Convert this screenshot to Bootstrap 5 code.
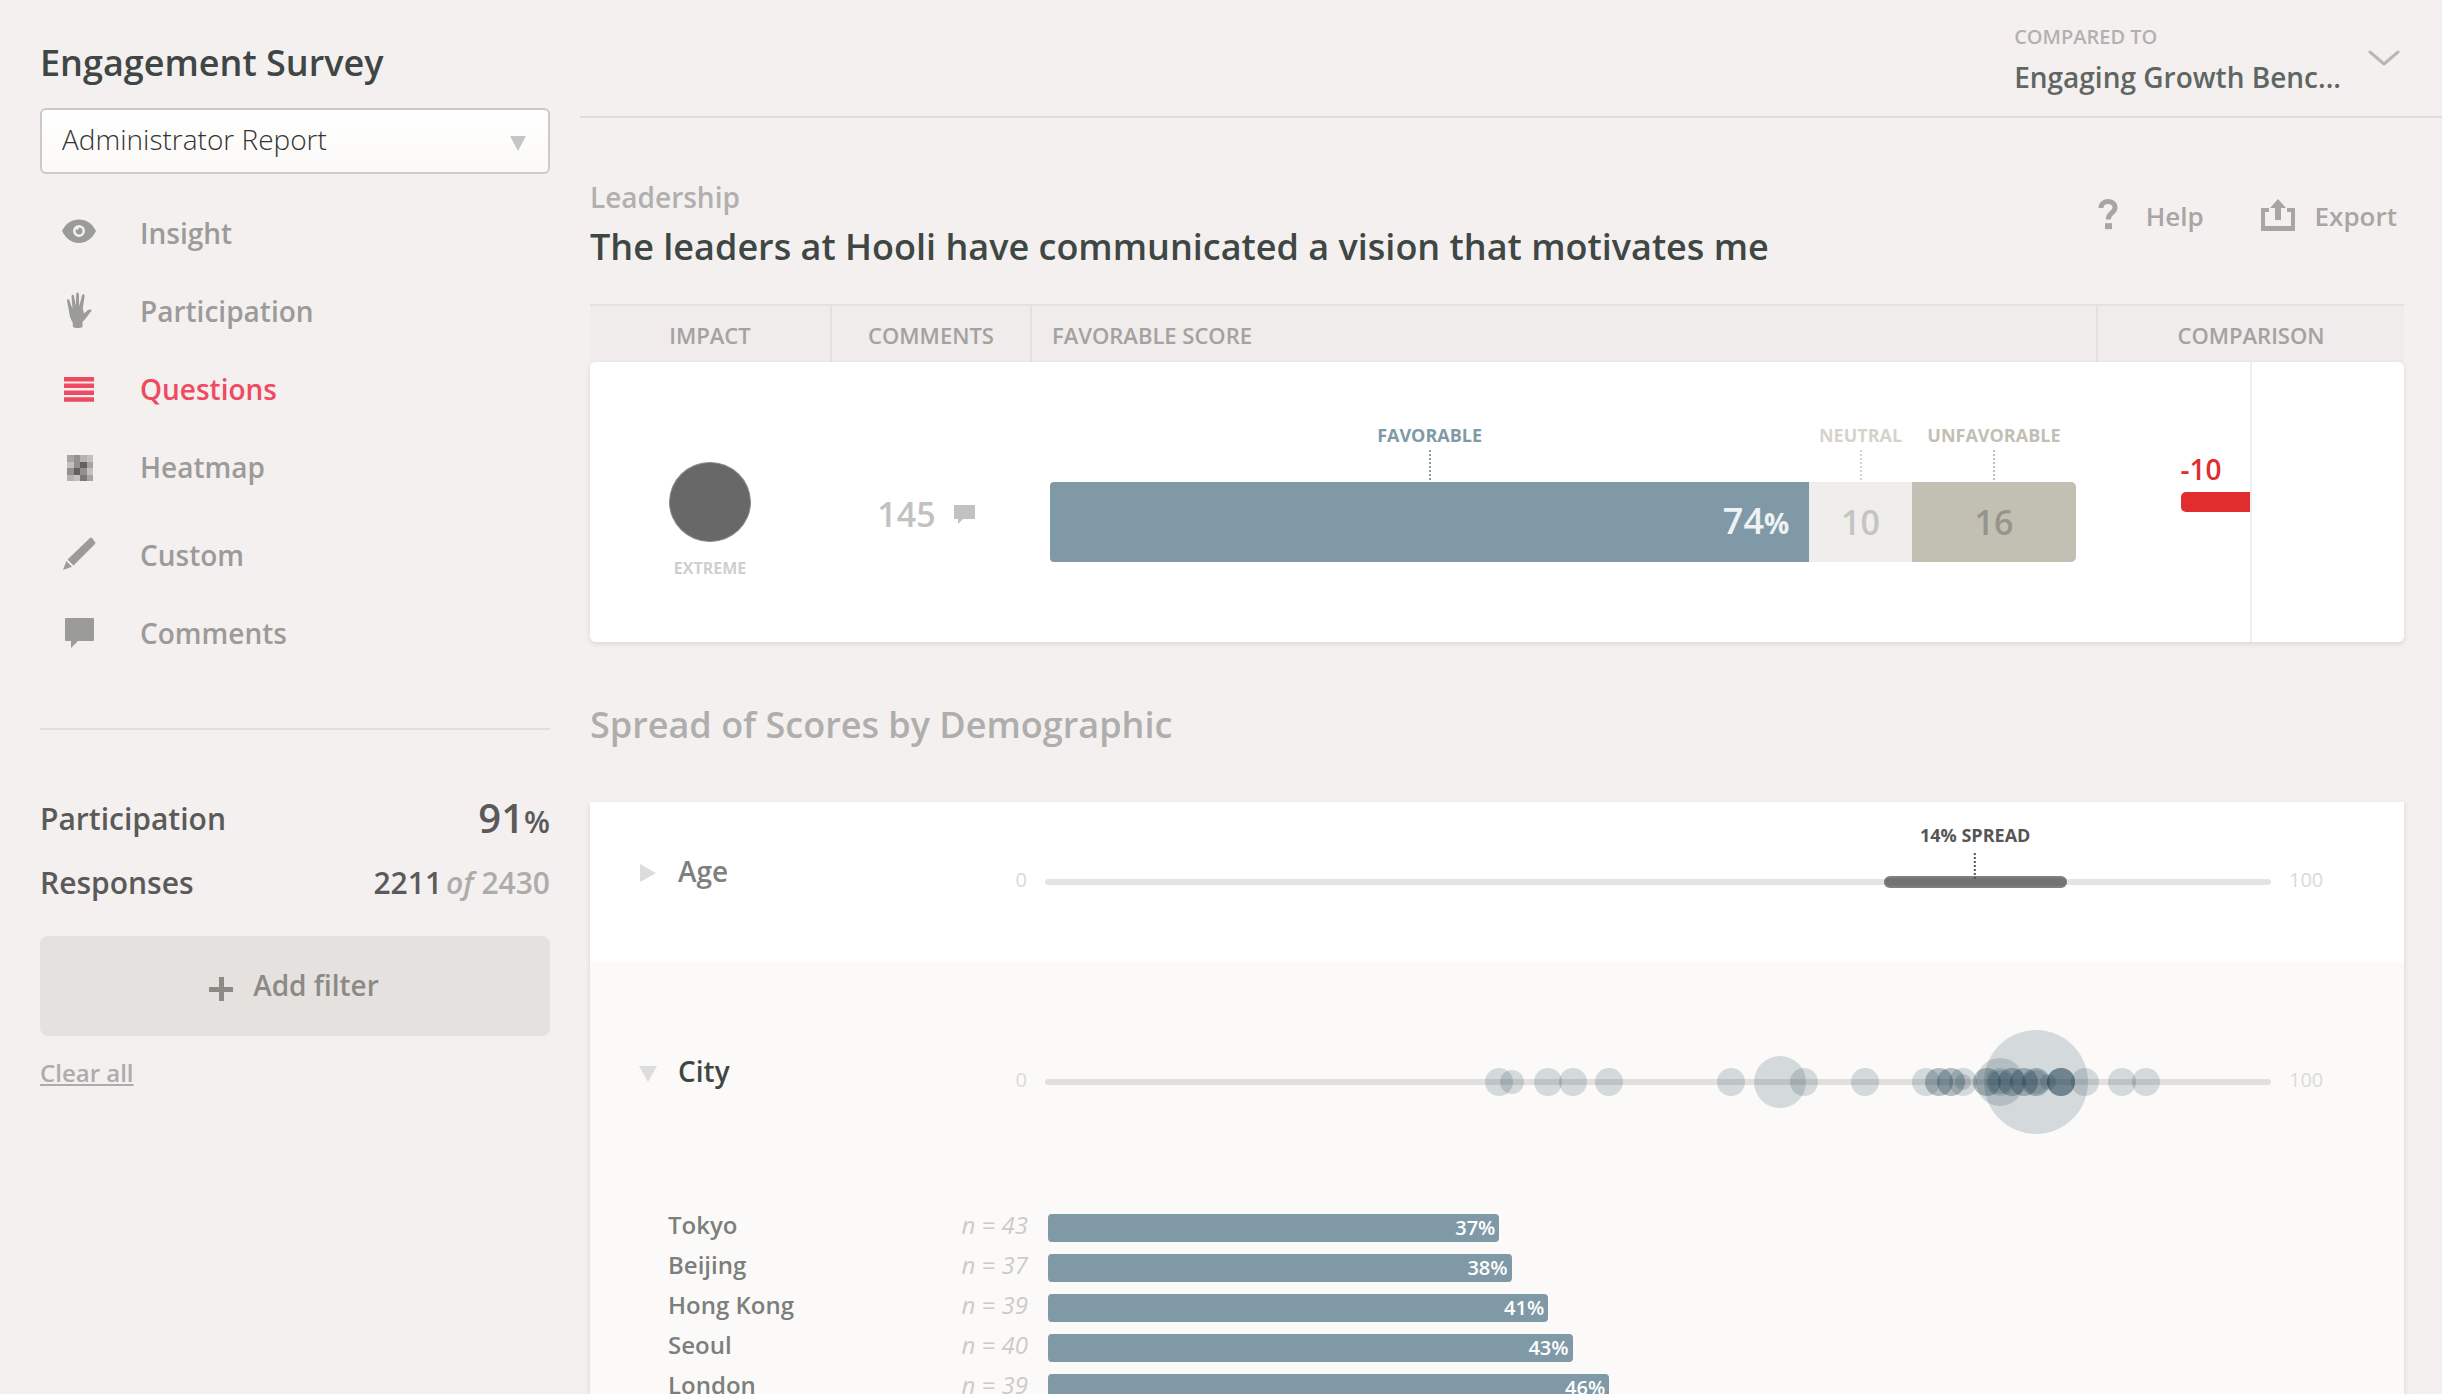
<!DOCTYPE html>
<html lang="en">
<head>
<meta charset="utf-8">
<meta name="viewport" content="width=device-width, initial-scale=1">
<title>Engagement Survey</title>
<link href="https://cdn.jsdelivr.net/npm/bootstrap@5.3.0/dist/css/bootstrap.min.css" rel="stylesheet">
<style>
body{font-family:"Open Sans","Noto Sans",sans-serif;background:#f4f0ef;color:#3f4744;font-weight:600;height:100vh;overflow:hidden}
svg{display:block;flex:none}
a{text-decoration:none;color:inherit}
.side{width:580px;padding:39px 30px 0 40px}
.page-title{font-size:36px;line-height:48px;font-weight:600;margin:0 0 21px}
.report{height:66px;border:2px solid #cdc9c8;border-radius:6px;background:linear-gradient(#fff,#faf9f7);font-size:28px;font-weight:300;line-height:40px;color:#333;padding:9px 60px 13px 20px;width:100%;appearance:none}
.report-arrow{position:absolute;right:24px;top:28px;pointer-events:none}
.menu{margin-top:20px}
.menu-gap{margin-top:10px}
.menu-link{display:flex;align-items:center;gap:40px;height:78px;padding-left:20px;font-size:28px;color:#9b9b99}
.menu-link.current{color:#f04a60}
.rule{height:2px;background:#e2dedd;margin:56px 0}
.stat{height:64px;font-size:30px;color:#5a5a5a}
.stat-big{font-size:40px}
.stat-unit{font-size:30px}
.soft{color:#acacab}
.filter-btn{height:100px;width:100%;border:0;border-radius:8px;background:#e5e1de;color:#8b8a85;font-size:28px;line-height:40px;font-weight:600;margin-top:22px;padding-right:8px}
.filter-text{padding-bottom:2px}
.clear{display:inline-block;font-size:24px;line-height:36px;margin-top:19px;color:#acacab;text-decoration:underline;font-weight:600}
.topbar{border-bottom:2px solid #e0dcdb;padding:23px 42px 19px 0}
.compare{border:0;background:none;padding:0;text-align:left;font-weight:600;gap:27px}
.compare-label{font-size:20px;line-height:28px;color:#b3b1b0}
.compare-value{font-size:28px;line-height:40px;color:#5f6664;margin-top:6px}
.content{padding:59px 38px 0 10px}
.topic{font-size:28px;line-height:40px;color:#b0b0ae}
.question{font-size:36px;line-height:48px;font-weight:600;margin:6px 0 33px}
.actions{font-size:26px;line-height:36px;color:#a7a6a4;padding:21px 7px 0 0;gap:57px}
.score{width:100%;table-layout:fixed;border-collapse:separate;border-spacing:0}
.score th{height:58px;border-top:2px solid #e5e1e0;border-right:2px solid #e5e1e0;background:#f0eceb;font-size:22px;line-height:32px;font-weight:600;color:#a3a2a0;text-align:center;padding:2px 0 0}
.score th:last-child{border-right:0}
.score td{height:280px;background:#fff;vertical-align:top;padding:0}
.score tbody tr{box-shadow:0 2px 5px rgba(80,60,60,.14);border-radius:6px}
.score td:first-child{border-radius:6px 0 0 6px}
.score td:last-child{border-radius:0 6px 6px 0}
.c-impact{width:242px}.c-comments{width:200px}.c-compare{width:306px}
.score .score-head{text-align:left;padding-left:20px}
.score .impact-cell{padding:100px 2px 0 0}
.impact-dot{width:82px;height:80px;border-radius:50%;background:#686868;border:1px solid #8a8a8a;margin:0 auto}
.impact-text{font-size:16px;line-height:24px;color:#cfcfcf;font-weight:700;text-align:center;margin-top:14px}
.score .comment-cell{padding:132px 12px 0 0}
.comment-count{font-size:34px;line-height:40px;color:#c2c2c2;gap:18px}
.score .bar-cell{padding:61px 22px 0 18px}
.seg-label{font-size:18px;line-height:24px;font-weight:700}
.seg-line{height:30px;margin:3px 0 2px;border-left:2px dotted currentColor}
.seg-block{height:80px;width:100%;font-size:34px;line-height:40px}
.seg-fav{color:#7f9aa6}.seg-neu{color:#d5d3cb}.seg-unf{color:#c2bfb3}
.seg-fav .seg-block{background:#7f9aa6;color:#eef2f4;border-radius:4px 0 0 4px;font-size:36px;padding-right:20px}
.seg-fav .pct{font-size:28px;font-weight:700}
.seg-neu .seg-block{background:#efeeec;color:#c4c4c2}
.seg-unf .seg-block{background:#c2bfb3;color:#96948b;border-radius:0 5px 5px 0}
.delta{width:50%;height:280px;border-right:2px solid #f0eff0;padding-top:87px;margin-left:1px}
.delta-item{margin-left:auto}
.delta-num{font-size:28px;line-height:40px;color:#e12d2e}
.delta-bar{height:20px;background:#e12d2e;border-radius:5px 0 0 5px;margin-top:3px}
.section-title{font-size:36px;line-height:48px;font-weight:600;color:#aeaeac;margin:59px 0 53px}
.demo{background:#fff;box-shadow:0 2px 5px rgba(80,60,60,.14)}
.demo-open{background:#fbfaf8}
.demo-row{height:160px}
.demo-open .demo-row{height:240px}
.demo-left{width:455px;padding:0 18px 0 48px}
.demo-name{border:0;background:none;padding:0 0 22px;font-size:28px;line-height:40px;font-weight:600;color:#7c807e;gap:20px}
.demo-open .demo-name{color:#3f4744}
.bound{font-size:20px;line-height:28px;color:#dadad9;font-weight:400;padding-bottom:4px}
.demo-right{width:133px;padding-left:18px}
.track{height:6px;border-radius:3px;background:#e4e4e3}
.demo-open .track{background:#e1e0de}
.plot{position:absolute;left:3px;right:3px;top:3px;height:0}
.dot{position:absolute;width:28px;height:28px;border-radius:50%;background:rgba(10,48,66,.16);transform:translate(-50%,-50%)}
.d16{width:16px;height:16px}.d24{width:24px;height:24px}.d48{width:48px;height:48px}.d52{width:52px;height:52px}.d104{width:104px;height:104px}
.spread{position:absolute;height:12px;border-radius:6px;background:#737373;border:solid #808080;border-width:2px 0;transform:translateY(-50%)}
.spread-tip{position:absolute;bottom:3px;transform:translateX(-50%);font-size:18px;line-height:24px;font-weight:700;color:#555;white-space:nowrap}
.spread-line{height:26px;border-left:2px dotted #555;margin-top:6px}
.cities{list-style:none;margin:0;padding:6px 136px 0 78px}
.cities li{height:40px}
.city-name,.city-n{font-size:24px;line-height:34px;padding-bottom:6px}
.city-name{width:240px;color:#7b7f7d}
.city-n{width:120px;text-align:right;font-style:italic;font-weight:400;color:#cbcbca}
.city-plot{margin-left:20px}
.city-bar{height:28px;border-radius:4px;background:#7f9aa6;color:#fff;font-size:20px;line-height:28px;text-align:right;padding-right:4px}
</style>
<script src="https://cdn.jsdelivr.net/npm/bootstrap@5.3.0/dist/js/bootstrap.bundle.min.js"></script>
</head>
<body>
<div class="d-flex">
<aside class="side flex-shrink-0">
  <h1 class="page-title">Engagement Survey</h1>
  <div class="position-relative">
    <select class="report" aria-label="Report"><option>Administrator Report</option></select>
    <svg class="report-arrow" width="16" height="15" fill="#c4c6c5"><path d="M0 0h16L8 15z"/></svg>
  </div>
  <nav class="menu">
    <a class="menu-link" href="#"><svg width="40" height="40" fill="currentColor"><path fill-rule="evenodd" d="M2 18C6 10 12 6.500 19 6.500S32 10 36 18C32 26 26 30 19 30S6 26 2 18zM19 12a6 6 0 1 0 0 12a6 6 0 1 0 0-12zM19 14.500a3.500 3.500 0 1 1 0 7a3.500 3.500 0 0 1-3-5.200l2 .7z"/></svg>Insight</a>
    <a class="menu-link" href="#"><svg width="40" height="40" fill="currentColor"><path d="M13 36L12.500 31C10.500 28 9.500 25 9 20L7 10C6.800 8 9 7.500 9.500 9.500L12.500 18L11.500 5.500C11.400 3.200 13.700 3 14 5L15.800 15L16.200 3C16.400 1 18.700 1 18.900 3L19.200 15.200L22 4.500C22.600 2.500 24.800 3 24.600 5L22.800 17.500L24 22.500L28 19C29.500 17.800 32 18.500 31.500 20C29 22.500 26 28 22.500 31L22.500 36C20 37.300 15 37.300 13 36z"/></svg>Participation</a>
    <a class="menu-link current" href="#"><svg width="40" height="40" fill="currentColor"><path d="M4 8h30v4.500H4zM4 14.500h30V19H4zM4 21.500h30V26H4zM4 28.200h30v4.500H4z"/></svg>Questions</a>
    <a class="menu-link" href="#"><svg width="40" height="40" shape-rendering="crispEdges"><g transform="translate(7 8)"><path fill="#b5b2b1" d="M0 0h26v26H0z"/><path fill="#a6a5a4" d="M0 0h7v7H0zM20 7h6v6h-6zM20 20h6v6h-6z"/><path fill="#c3c0bf" d="M20 0h6v7h-6zM0 7h7v6H0zM7 20h6v6H7zM20 13h6v7h-6z"/><path fill="#92918f" d="M7 0h6v13H7zM0 13h7v7H0zM13 13h7v7h-7z"/><path fill="#626161" d="M13 7h7v6h-7zM7 13h6v7H7z"/><path fill="#7a7978" d="M13 20h7v6h-7z"/></g></svg>Heatmap</a>
    <a class="menu-link menu-gap" href="#"><svg width="40" height="40" fill="currentColor"><path d="M30 3Q31 2 32 3L35 7Q36 8 35 9L13.500 30.500L7.500 24.500zM6.300 26L12 31.700L3 35z"/></svg>Custom</a>
    <a class="menu-link" href="#"><svg width="40" height="40" fill="currentColor"><path d="M6 5h27q1 0 1 1v21q0 1-1 1H18l-7 7v-7H6q-1 0-1-1V6q0-1 1-1z"/></svg>Comments</a>
  </nav>
  <div class="rule"></div>
  <div class="stat d-flex justify-content-between align-items-center"><span>Participation</span><span class="stat-big">91<span class="stat-unit">%</span></span></div>
  <div class="stat d-flex justify-content-between align-items-center"><span>Responses</span><span>2211<span class="soft"><i class="ms-1">of</i> 2430</span></span></div>
  <button class="filter-btn d-flex justify-content-center align-items-center" type="button"><svg width="24" height="30" class="me-3" fill="currentColor"><path d="M10 6h5v10h9v5h-9v9h-5v-9H0v-5h10z"/></svg><span class="filter-text ms-1">Add filter</span></button>
  <a class="clear" href="#">Clear all</a>
</aside>
<main class="flex-grow-1">
  <header class="topbar d-flex justify-content-end">
    <button class="compare d-flex align-items-center" type="button">
      <span><span class="compare-label d-block">COMPARED TO</span><span class="compare-value d-block">Engaging Growth Benc...</span></span>
      <svg width="32" height="22" fill="none" stroke="#b9b7b6" stroke-width="3" stroke-linecap="round" stroke-linejoin="round"><path d="M2 3l14 12L30 3"/></svg>
    </button>
  </header>
  <div class="content">
    <div class="d-flex justify-content-between">
      <div><div class="topic">Leadership</div><h2 class="question">The leaders at Hooli have communicated a vision that motivates me</h2></div>
      <div class="actions d-flex align-items-start">
        <a href="#" class="d-flex"><svg width="20" height="32" class="me-4" fill="none" stroke="currentColor"><path stroke-width="5" d="M3 10C3 1.500 17 1.500 17 9.500C17 15 10.300 14.500 10.300 21.500"/><path stroke-width="6" d="M7 28.200h7"/></svg><span class="ms-1">Help</span></a>
        <a href="#" class="d-flex"><svg width="34" height="34" class="me-3" fill="currentColor"><path d="M0 10h8v4H4v14h26V14h-4v-4h8v23H0zM17 1l8 9h-5v12h-6V10H9z"/></svg><span class="ms-1">Export</span></a>
      </div>
    </div>
    <table class="score">
      <thead><tr><th class="c-impact">IMPACT</th><th class="c-comments">COMMENTS</th><th class="score-head">FAVORABLE SCORE</th><th class="c-compare">COMPARISON</th></tr></thead>
      <tbody><tr>
        <td class="impact-cell"><div class="impact-dot"></div><div class="impact-text">EXTREME</div></td>
        <td class="comment-cell"><div class="comment-count d-flex justify-content-center align-items-center"><span>145</span><svg width="21" height="20" fill="currentColor"><path d="M0 1h21v14H9l-5 5v-5H0z"/></svg></div></td>
        <td class="bar-cell"><div class="d-flex">
          <div class="seg-fav d-flex flex-column align-items-center" style="width:74%"><span class="seg-label">FAVORABLE</span><span class="seg-line"></span><div class="seg-block d-flex justify-content-end align-items-center"><span>74<span class="pct">%</span></span></div></div>
          <div class="seg-neu d-flex flex-column align-items-center" style="width:10%"><span class="seg-label">NEUTRAL</span><span class="seg-line"></span><div class="seg-block d-flex justify-content-center align-items-center">10</div></div>
          <div class="seg-unf d-flex flex-column align-items-center" style="width:16%"><span class="seg-label">UNFAVORABLE</span><span class="seg-line"></span><div class="seg-block d-flex justify-content-center align-items-center">16</div></div>
        </div></td>
        <td><div class="delta"><div class="delta-item" style="width:46%"><div class="delta-num">-10</div><div class="delta-bar"></div></div></div></td>
      </tr></tbody>
    </table>
    <h2 class="section-title">Spread of Scores by Demographic</h2>
    <div class="demo">
      <div class="demo-row d-flex align-items-center">
        <div class="demo-left d-flex justify-content-between align-items-center"><button type="button" class="demo-name d-flex align-items-center"><svg width="20" height="22" fill="#dcdcdc"><path d="M2 4l16 9L2 22z"/></svg>Age</button><span class="bound">0</span></div>
        <div class="track flex-grow-1 position-relative"><div class="plot">
          <div class="spread" style="left:68.5%;width:15%"></div>
          <div class="spread-tip d-flex flex-column align-items-center" style="left:76%">14% SPREAD<span class="spread-line"></span></div>
        </div></div>
        <div class="demo-right bound">100</div>
      </div>
      <div class="demo-open">
        <div class="demo-row d-flex align-items-center">
          <div class="demo-left d-flex justify-content-between align-items-center"><button type="button" class="demo-name d-flex align-items-center"><svg width="20" height="22" fill="#dcdcdc"><path d="M1 6h18l-9 16z"/></svg>City</button><span class="bound">0</span></div>
          <div class="track flex-grow-1 position-relative"><div class="plot">
            <i class="dot" style="left:37%"></i><i class="dot d24" style="left:38%"></i><i class="dot" style="left:41%"></i><i class="dot" style="left:43%"></i><i class="dot" style="left:46%"></i>
            <i class="dot" style="left:56%"></i><i class="dot d52" style="left:60%"></i><i class="dot" style="left:62%"></i><i class="dot" style="left:67%"></i>
            <i class="dot" style="left:72%"></i><i class="dot" style="left:73%"></i><i class="dot" style="left:73%"></i><i class="dot" style="left:74%"></i><i class="dot" style="left:74%"></i><i class="dot" style="left:75%"></i><i class="dot d16" style="left:75%"></i>
            <i class="dot" style="left:77%"></i><i class="dot" style="left:77%"></i><i class="dot d48" style="left:78%"></i><i class="dot" style="left:78%"></i><i class="dot d24" style="left:78%"></i><i class="dot" style="left:79%"></i><i class="dot" style="left:79%"></i>
            <i class="dot" style="left:80%"></i><i class="dot" style="left:80%"></i><i class="dot d104" style="left:81%"></i><i class="dot" style="left:81%"></i><i class="dot" style="left:81%"></i><i class="dot d24" style="left:81%"></i><i class="dot d16" style="left:82%"></i>
            <i class="dot" style="left:83%"></i><i class="dot" style="left:83%"></i><i class="dot" style="left:83%"></i><i class="dot" style="left:83%"></i><i class="dot" style="left:85%"></i><i class="dot" style="left:88%"></i><i class="dot" style="left:90%"></i>
          </div></div>
          <div class="demo-right bound">100</div>
        </div>
        <ul class="cities">
          <li class="d-flex align-items-center"><span class="city-name">Tokyo</span><span class="city-n">n = 43</span><div class="city-plot flex-grow-1"><div class="city-bar" style="width:37%">37%</div></div></li>
          <li class="d-flex align-items-center"><span class="city-name">Beijing</span><span class="city-n">n = 37</span><div class="city-plot flex-grow-1"><div class="city-bar" style="width:38%">38%</div></div></li>
          <li class="d-flex align-items-center"><span class="city-name">Hong Kong</span><span class="city-n">n = 39</span><div class="city-plot flex-grow-1"><div class="city-bar" style="width:41%">41%</div></div></li>
          <li class="d-flex align-items-center"><span class="city-name">Seoul</span><span class="city-n">n = 40</span><div class="city-plot flex-grow-1"><div class="city-bar" style="width:43%">43%</div></div></li>
          <li class="d-flex align-items-center"><span class="city-name">London</span><span class="city-n">n = 39</span><div class="city-plot flex-grow-1"><div class="city-bar" style="width:46%">46%</div></div></li>
        </ul>
      </div>
    </div>
  </div>
</main>
</div>
</body>
</html>
